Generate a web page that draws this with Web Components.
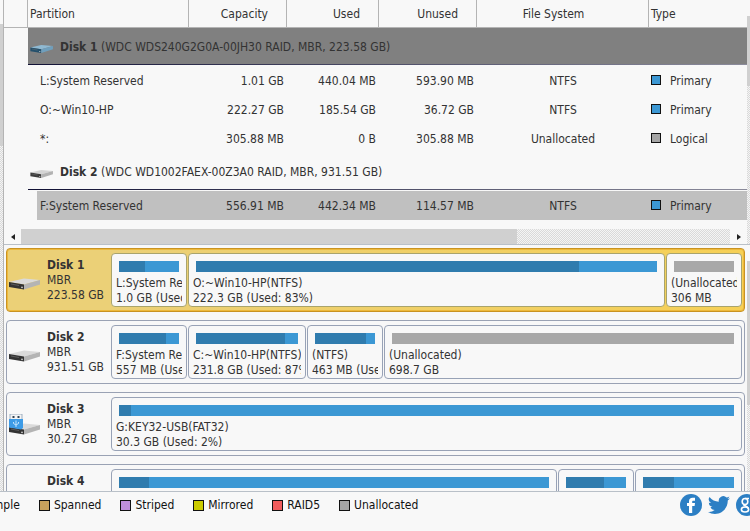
<!DOCTYPE html>
<html lang="en">
<head>
<meta charset="utf-8">
<title>Partitions</title>
<style>
  html, body { height: 100%; }
  body {
    margin: 0;
    background: #f8f8f8;
    color: #333;
    font: 12px/15px "DejaVu Sans Condensed", "DejaVu Sans", sans-serif;
    overflow: hidden;
  }
</style>
</head>
<body>
<partition-app>
  <side-scroll slot="left" style="--start: 24px; --thumb: 122px"></side-scroll>
  <partition-table slot="table"></partition-table>
  <side-scroll slot="table-scroll" style="--start: 16px; --thumb: 70px"></side-scroll>
  <bottom-scroll slot="bottom-scroll"></bottom-scroll>

  <disk-card slot="disks" name="Disk 1" scheme="MBR" size="223.58 GB" icon="disk" selected>
    <disk-part share="76" used="43" label="L:System Res" info="1.0 GB (Used"></disk-part>
    <disk-part share="477" used="83" label="O:~Win10-HP(NTFS)" info="222.3 GB (Used: 83%)"></disk-part>
    <disk-part share="76" free label="(Unallocated" info="306 MB"></disk-part>
  </disk-card>
  <disk-card slot="disks" name="Disk 2" scheme="MBR" size="931.51 GB" icon="disk">
    <disk-part share="76" used="79" label="F:System Res" info="557 MB (Used"></disk-part>
    <disk-part share="118" used="87" label="C:~Win10-HP(NTFS)" info="231.8 GB (Used: 87%"></disk-part>
    <disk-part share="76" used="85" label="(NTFS)" info="463 MB (Used"></disk-part>
    <disk-part share="358" free label="(Unallocated)" info="698.7 GB"></disk-part>
  </disk-card>
  <disk-card slot="disks" name="Disk 3" scheme="MBR" size="30.27 GB" icon="usb">
    <disk-part share="631" used="2" label="G:KEY32-USB(FAT32)" info="30.3 GB (Used: 2%)"></disk-part>
  </disk-card>
  <disk-card slot="disks" name="Disk 4" scheme="" size="">
    <disk-part share="446" used="7" label="" info=""></disk-part>
    <disk-part share="76" used="63" label="" info=""></disk-part>
    <disk-part share="107" used="34" label="" info=""></disk-part>
  </disk-card>
  <side-scroll slot="disk-scroll" style="--start: 16px; --thumb: 144px"></side-scroll>

  <legend-bar slot="footer">
    <legend-item color="#3c98d4">Simple</legend-item>
    <legend-item color="#c9a25c">Spanned</legend-item>
    <legend-item color="#c08fdc">Striped</legend-item>
    <legend-item color="#cccc00">Mirrored</legend-item>
    <legend-item color="#f05c5c">RAID5</legend-item>
    <legend-item color="#a5a5a5">Unallocated</legend-item>
    <social-links slot="links"></social-links>
  </legend-bar>
</partition-app>

<script>
const TRACK = "repeating-conic-gradient(#d9d9d9 0 25%, #f4f4f4 0 50%) 0 0 / 2px 2px";

const diskIcon = (top, side, front) => `
  <path d="M0 12 L15 8.500 L31 10 L15 14.500 Z" fill="${top}"/>
  <path d="M0 12 L15 14.500 V19.500 L0 17 Z" fill="${front}"/>
  <path d="M15 14.500 L31 10 V14.500 L15 19.500 Z" fill="${side}"/>
  <path d="M2 14 L10 15.500" stroke="#777" stroke-width=".6"/>
  <circle cx="13" cy="17.400" r=".8" fill="#ddd"/>`;

class PartitionApp extends HTMLElement {
  constructor() {
    super();
    this.attachShadow({ mode: "open" });
  }

  connectedCallback() {
    this.shadowRoot.innerHTML = `
      <style>
        :host { display: flex; flex-direction: column; height: 100vh; overflow: hidden; }
        .main { display: flex; flex: 1; min-height: 0; }
        .center { flex: 1; min-width: 0; display: flex; flex-direction: column; border-left: 1px solid #b4b4b4; }
        .top { display: flex; border-bottom: 1px solid #b9c0c8; }
        .grid { flex: 1; min-width: 0; }
        .bottom { display: flex; flex: 1; min-height: 0; }
        .disks {
          flex: 1; min-width: 0; box-sizing: border-box;
          display: flex; flex-direction: column; gap: 8px;
          padding: 3px 2px 0; overflow: hidden;
        }
      </style>
      <div class="main">
        <slot name="left"></slot>
        <div class="center">
          <div class="top">
            <div class="grid">
              <slot name="table"></slot>
              <slot name="bottom-scroll"></slot>
            </div>
            <slot name="table-scroll"></slot>
          </div>
          <div class="bottom">
            <div class="disks"><slot name="disks"></slot></div>
            <slot name="disk-scroll"></slot>
          </div>
        </div>
      </div>
      <slot name="footer"></slot>
    `;
  }
}

class SideScroll extends HTMLElement {
  constructor() {
    super();
    this.attachShadow({ mode: "open" });
  }

  connectedCallback() {
    this.shadowRoot.innerHTML = `
      <style>
        :host { display: flex; flex-direction: column; flex: none; width: 3px; overflow: hidden; }
        .gap { height: var(--start); }
        .thumb { height: var(--thumb); background: #d0d0d0; }
        .track { flex: 1; background: ${TRACK}; }
      </style>
      <div class="gap"></div><div class="thumb"></div><div class="track"></div>
    `;
  }
}

class BottomScroll extends HTMLElement {
  constructor() {
    super();
    this.attachShadow({ mode: "open" });
  }

  connectedCallback() {
    this.shadowRoot.innerHTML = `
      <style>
        :host { display: flex; height: 15px; margin-top: 9px; }
        button { width: 17px; padding: 0; border: 0; background: none; display: grid; place-items: center; }
        .track { flex: 1; background: ${TRACK}; }
        .thumb { width: 70%; height: 100%; background: #d0d0d0; }
      </style>
      <button aria-label="Scroll left"><svg width="4" height="6"><path d="M4 0 V6 L0 3 Z" fill="#222"/></svg></button>
      <div class="track"><div class="thumb"></div></div>
      <button aria-label="Scroll right"><svg width="4" height="6"><path d="M0 0 V6 L4 3 Z" fill="#222"/></svg></button>
    `;
  }
}

class PartitionTable extends HTMLElement {
  constructor() {
    super();
    this.attachShadow({ mode: "open" });
    this.groups = [
      {
        name: "Disk 1", info: "(WDC WDS240G2G0A-00JH30 RAID, MBR, 223.58 GB)", selected: true,
        rows: [
          ["L:System Reserved", "1.01 GB", "440.04 MB", "593.90 MB", "NTFS", "Primary"],
          ["O:~Win10-HP", "222.27 GB", "185.54 GB", "36.72 GB", "NTFS", "Primary"],
          ["*:", "305.88 MB", "0 B", "305.88 MB", "Unallocated", "Logical"],
        ],
      },
      {
        name: "Disk 2", info: "(WDC WD1002FAEX-00Z3A0 RAID, MBR, 931.51 GB)",
        rows: [
          ["F:System Reserved", "556.91 MB", "442.34 MB", "114.57 MB", "NTFS", "Primary", true],
        ],
      },
    ];
  }

  connectedCallback() {
    this.render();
  }

  groupRows(group) {
    const icon = group.selected
      ? diskIcon("#8fb9d2", "#6f9fbd", "#24506c")
      : diskIcon("#d4d4d4", "#b2b2b2", "#3c3c3c");
    const head = `
      <tr class="disk ${group.selected ? "on" : ""}">
        <td></td>
        <th colspan="6" scope="rowgroup">
          <div class="title">
            <svg width="24" height="16" viewBox="0 3 32 22">${icon}</svg>
            <span><b>${group.name}</b> ${group.info}</span>
          </div>
        </th>
      </tr>`;
    const rows = group.rows.map(([name, cap, used, unused, fs, type, on]) => `
      <tr class="part ${on ? "on" : ""}">
        <td></td>
        <td class="name">${name}</td>
        <td class="num">${cap}</td>
        <td class="num">${used}</td>
        <td class="num">${unused}</td>
        <td class="mid">${fs}</td>
        <td class="type"><i class="${type.toLowerCase()}"></i>${type}</td>
      </tr>`);
    return head + rows.join("");
  }

  render() {
    this.shadowRoot.innerHTML = `
      <style>
        :host { display: block; }
        table { width: 100%; table-layout: fixed; border-collapse: separate; border-spacing: 0; }
        th, td { padding: 2px 0 0; box-sizing: border-box; white-space: nowrap; font-weight: normal; }
        thead th { height: 28px; border-right: 1px solid #b4b4b4; border-bottom: 1px solid #b4b4b4; text-align: right; padding-right: 18px; }
        thead th:first-child { padding: 0; }
        thead th.left { text-align: left; padding: 2px 0 0 2px; }
        thead th.mid { text-align: center; }
        thead th:last-child { border-right: 0; }
        .disk th { height: 38px; text-align: left; padding: 0; }
        .title {
          display: flex; align-items: center; gap: 6px; box-sizing: border-box; height: 37px; padding: 2px 0 0 2px;
          border-bottom: 1px solid; border-image: linear-gradient(90deg, #101034, #8c8c9c) 1;
          margin-bottom: 1px;
        }
        .title svg { margin-top: 4px; }
        .disk.on .title { background: #808080; }
        .part td { height: 29px; }
        .part .name { padding-left: 12px; }
        .num { text-align: right; padding-right: 3px; }
        .mid { text-align: center; }
        .type { padding-left: 2px; }
        .part.on td:not(:first-child) { background: #c0c0c0; }
        .part.on td.name { background: linear-gradient(90deg, transparent 9px, #c0c0c0 9px); }
        i {
          display: inline-block; box-sizing: border-box; width: 10px; height: 10px;
          border: 1px solid #111; margin-right: 9px; background: #3c98d4;
        }
        i.logical { background: #a5a5a5; }
      </style>
      <table>
        <colgroup>
          <col style="width: 24px"><col style="width: 161px"><col style="width: 98px">
          <col style="width: 92px"><col style="width: 98px"><col style="width: 172px"><col>
        </colgroup>
        <thead>
          <tr>
            <th></th><th class="left">Partition</th><th>Capacity</th><th>Used</th>
            <th>Unused</th><th class="mid">File System</th><th class="left">Type</th>
          </tr>
        </thead>
        <tbody>${this.groups.map((g) => this.groupRows(g)).join("")}</tbody>
      </table>
    `;
  }
}

class DiskCard extends HTMLElement {
  constructor() {
    super();
    this.attachShadow({ mode: "open" });
  }

  connectedCallback() {
    const disk = diskIcon("#dadada", "#b4b4b4", "#333");
    const usb = `
      <g transform="translate(0 1)">${disk}</g>
      <path d="M1 0 H13 V6 H1 Z" fill="#f4f4f4" stroke="#8aa0b4" stroke-width=".8"/>
      <path d="M3.500 2 H5.500 V4 H3.500 Z M8.500 2 H10.500 V4 H8.500 Z" fill="#345"/>
      <path d="M0 5 H14 V14 L12 15.500 L0 13.500 Z" fill="#3d9be6"/>
      <path d="M7 6.500 V13 M4.500 8 V9.500 L7 11 L9.500 9.500 V8" stroke="#c4e4fc" fill="none"/>`;
    const icon = this.getAttribute("icon");
    this.shadowRoot.innerHTML = `
      <style>
        :host {
          display: flex; flex: none; box-sizing: border-box; height: 64px;
          padding: 4px 2px; border: 1px solid #9aa2b4; border-radius: 4px; background: #f8f8f8;
          --edge: #98a2b6;
        }
        :host([selected]) {
          background: linear-gradient(90deg, #ebd077 14%, #f6d056);
          border-color: #c99322;
          box-shadow: inset 0 0 0 1px #eeb93c;
          --edge: #a9a46c;
        }
        .icon { width: 32px; padding-top: 8px; display: grid; place-items: center; }
        .text { width: 64px; box-sizing: border-box; padding: 5px 0 0 6px; white-space: nowrap; }
        .parts { flex: 1; min-width: 0; display: flex; gap: 1px; margin-left: 6px; }
      </style>
      <div class="icon">${icon ? `<svg width="32" height="28" viewBox="0 0 32 28">${icon === "usb" ? usb : disk}</svg>` : ""}</div>
      <div class="text">
        <b>${this.getAttribute("name")}</b>
        <div>${this.getAttribute("scheme")}</div>
        <div>${this.getAttribute("size")}</div>
      </div>
      <div class="parts"><slot></slot></div>
    `;
  }
}

class DiskPart extends HTMLElement {
  constructor() {
    super();
    this.attachShadow({ mode: "open" });
  }

  connectedCallback() {
    const used = this.getAttribute("used") || 0;
    const share = this.getAttribute("share");
    this.shadowRoot.innerHTML = `
      <style>
        :host {
          display: block; box-sizing: border-box; min-width: 0; overflow: hidden;
          flex: ${share} ${share} ${share}px;
          padding: 7px 4px 0; border: 1px solid var(--edge); border-radius: 4px; background: #f8f8f8;
        }
        .bar { height: 11px; margin: 0 3px; background: #3c98d4; }
        .used { height: 100%; width: ${used}%; background: #307cae; }
        :host([free]) .bar { background: #a8a8a8; }
        .text { margin-top: 4px; overflow: hidden; white-space: nowrap; }
      </style>
      <div class="bar"><div class="used"></div></div>
      <div class="text">
        <div>${this.getAttribute("label")}</div>
        <div>${this.getAttribute("info")}</div>
      </div>
    `;
  }
}

class LegendBar extends HTMLElement {
  constructor() {
    super();
    this.attachShadow({ mode: "open" });
  }

  connectedCallback() {
    this.shadowRoot.innerHTML = `
      <style>
        :host {
          display: flex; flex: none; justify-content: space-between; box-sizing: border-box;
          height: 40px; border-top: 1px solid #b9c0c8; color: #111; overflow: hidden;
        }
        .items { display: flex; gap: 19px; margin-left: -32px; padding-top: 6px; }
      </style>
      <div class="items"><slot></slot></div>
      <slot name="links"></slot>
    `;
  }
}

class LegendItem extends HTMLElement {
  constructor() {
    super();
    this.attachShadow({ mode: "open" });
  }

  connectedCallback() {
    this.shadowRoot.innerHTML = `
      <style>
        :host { display: flex; gap: 4px; height: 15px; align-items: center; white-space: nowrap; }
        i { box-sizing: border-box; width: 11px; height: 11px; border: 1px solid #111; background: ${this.getAttribute("color")}; }
      </style>
      <i></i><span><slot></slot></span>
    `;
  }
}

class SocialLinks extends HTMLElement {
  constructor() {
    super();
    this.attachShadow({ mode: "open" });
  }

  connectedCallback() {
    this.shadowRoot.innerHTML = `
      <style>
        :host { display: flex; gap: 6px; padding-top: 2px; margin-right: -8px; }
        a { display: block; height: 22px; }
        svg { display: block; }
      </style>
      <a href="#facebook" aria-label="Facebook"><svg width="22" height="22" viewBox="0 0 22 22">
        <circle cx="11" cy="11" r="11" fill="#2c7fc4"/>
        <path d="M9 19 V12 H7 V9 H9 V7.500 C9 5 10.300 3.800 12.500 3.800 H15 V6.700 H13.300 C12.500 6.700 12.200 7 12.200 7.800 V9 H15 L14.600 12 H12.200 V19 Z" fill="#fff"/>
      </svg></a>
      <a href="#twitter" aria-label="Twitter"><svg width="22" height="22" viewBox="0 0 24 24">
        <path d="M23.950 4.600a10 10 0 0 1-2.800.8 5 5 0 0 0 2.160-2.700 10 10 0 0 1-3.120 1.200 4.920 4.920 0 0 0-8.380 4.480A14 14 0 0 1 1.640 3.200a4.900 4.900 0 0 0 1.520 6.570 5 5 0 0 1-2.230-.6v.06a4.920 4.920 0 0 0 3.950 4.820 5 5 0 0 1-2.210.09 4.940 4.940 0 0 0 4.600 3.420A9.900 9.900 0 0 1 0 19.540a14 14 0 0 0 7.550 2.210c9.050 0 14-7.500 14-13.980l-.02-.64a10 10 0 0 0 2.420-2.530z" fill="#2c7fc4"/>
      </svg></a>
      <a href="#google" aria-label="Google"><svg width="22" height="22" viewBox="0 0 22 22">
        <circle cx="11" cy="11" r="11" fill="#2c7fc4"/>
        <g fill="none" stroke="#fff" stroke-width="1.600">
          <ellipse cx="9" cy="7.500" rx="2.800" ry="3"/>
          <ellipse cx="9" cy="15.500" rx="3.600" ry="2.500"/>
          <path d="M9 4.500 H13 M8 10.500 C7 12 11.500 11.500 12.400 14.500"/>
        </g>
      </svg></a>
    `;
  }
}

customElements.define("partition-app", PartitionApp);
customElements.define("side-scroll", SideScroll);
customElements.define("bottom-scroll", BottomScroll);
customElements.define("partition-table", PartitionTable);
customElements.define("disk-card", DiskCard);
customElements.define("disk-part", DiskPart);
customElements.define("legend-bar", LegendBar);
customElements.define("legend-item", LegendItem);
customElements.define("social-links", SocialLinks);
</script>
</body>
</html>
